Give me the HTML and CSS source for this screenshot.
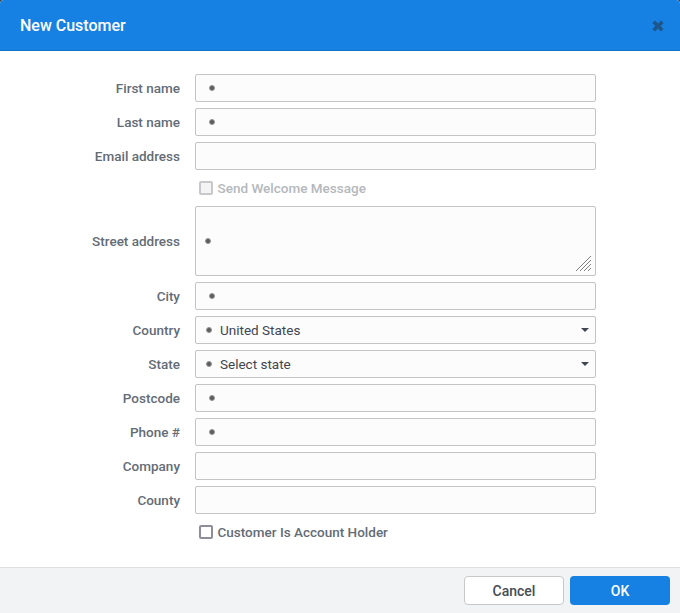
FILE: index.html
```html
<!DOCTYPE html>
<html lang="en">
<head>
<meta charset="utf-8">
<title>New Customer</title>
<link rel="stylesheet" href="styles.css">
</head>
<body>
<div class="modal">
  <header class="head">
    <h1 class="title">New Customer</h1>
    <svg class="close" width="12" height="12" viewBox="0 0 12 12"><path d="M3 .4 6 3.4 9 .4 11.6 3 8.6 6 11.6 9 9 11.6 6 8.6 3 11.6 .4 9 3.4 6 .4 3Z"/></svg>
  </header>
  <main class="form">
    <label class="lbl">First name</label><div class="field"><i class="dot"></i></div>
    <label class="lbl">Last name</label><div class="field"><i class="dot"></i></div>
    <label class="lbl">Email address</label><div class="field"></div>
    <span></span><div class="check muted"><i class="box"></i>Send Welcome Message</div>
    <label class="lbl">Street address</label>
    <div class="field area"><i class="dot"></i>
      <svg class="grip" width="15" height="15" viewBox="0 0 15 15"><path d="M0 15 15 0M4 15 15 4M8 15 15 8M12 15 15 12"/></svg>
    </div>
    <label class="lbl">City</label><div class="field"><i class="dot"></i></div>
    <label class="lbl">Country</label><div class="field sel"><i class="dot"></i><span class="val">United States</span><i class="caret"></i></div>
    <label class="lbl">State</label><div class="field sel"><i class="dot"></i><span class="val">Select state</span><i class="caret"></i></div>
    <label class="lbl">Postcode</label><div class="field"><i class="dot"></i></div>
    <label class="lbl">Phone #</label><div class="field"><i class="dot"></i></div>
    <label class="lbl">Company</label><div class="field"></div>
    <label class="lbl">County</label><div class="field"></div>
    <span></span><div class="check"><i class="box"></i>Customer Is Account Holder</div>
  </main>
  <footer class="foot">
    <button class="btn cancel">Cancel</button>
    <button class="btn ok">OK</button>
  </footer>
</div>
</body>
</html>
```
FILE: styles.css
```css
html, body { margin: 0; height: 100%; background: #3c3c3c; }
body { font-family: Roboto, "Liberation Sans", sans-serif; font-size: 14px; }
.modal { height: 613px; width: 680px; display: flex; flex-direction: column; background: #fff; border-radius: 4px 4px 0 0; overflow: hidden; }
.head { height: 51px; box-sizing: border-box; border-bottom: 1px solid #1273cb; background: #1681e2; display: flex; align-items: center; justify-content: space-between; padding: 1px 16px 0 20px; flex: none; }
.title { margin: 0; color: #fff; font-size: 16px; font-weight: 500; }
.close { fill: #1e568c; }
.form { flex: 1; display: grid; grid-template-columns: 180px 401px; column-gap: 15px; row-gap: 6px; grid-auto-rows: min-content; padding-top: 23px; align-items: center; }
.lbl { text-align: right; color: #646c76; font-weight: 500; font-size: 13.5px; }
.field { height: 28px; box-sizing: border-box; border: 1px solid #c4c4c4; border-radius: 2px; background: #fcfcfc; display: flex; align-items: center; padding-left: 13px; color: #3f4650; }
.area { height: 70px; padding-left: 9px; position: relative; }
.sel { padding-left: 10px; }
.dot { width: 6px; height: 6px; box-sizing: border-box; border-radius: 50%; background: #5c5c5c; border: 1px solid #969696; flex: none; }
.val { margin-left: 8px; font-size: 13.5px; }
.caret { margin-left: auto; margin-right: 6px; border: 4.5px solid transparent; border-top-color: #3f4650; border-bottom: 0; }
.grip { position: absolute; right: 4px; bottom: 4px; fill: none; stroke: #808080; stroke-width: 1; }
.check { height: 24px; display: flex; align-items: center; padding-left: 4px; color: #646c76; font-size: 13.5px; font-weight: 500; }
.box { width: 14px; height: 14px; border: 2px solid #8e8e9a; border-radius: 2px; box-sizing: border-box; margin-right: 4.5px; background: #fff; }
.muted { color: #b4b8bc; }
.muted .box { border-color: #c8c8cc; background: #f4f4f4; }
.foot { height: 46px; flex: none; box-sizing: border-box; border-top: 1px solid #dfdfdf; background: #f2f3f5; display: flex; justify-content: flex-end; align-items: center; gap: 6px; padding: 0 10px; }
.btn { width: 100px; height: 29px; font: 500 14px Roboto, "Liberation Sans", sans-serif; border-radius: 4px; padding: 0; }
.cancel { background: #fff; border: 1px solid #c9c9c9; color: #454c55; }
.ok { background: #1681e2; border: 0; color: #fff; }
```
